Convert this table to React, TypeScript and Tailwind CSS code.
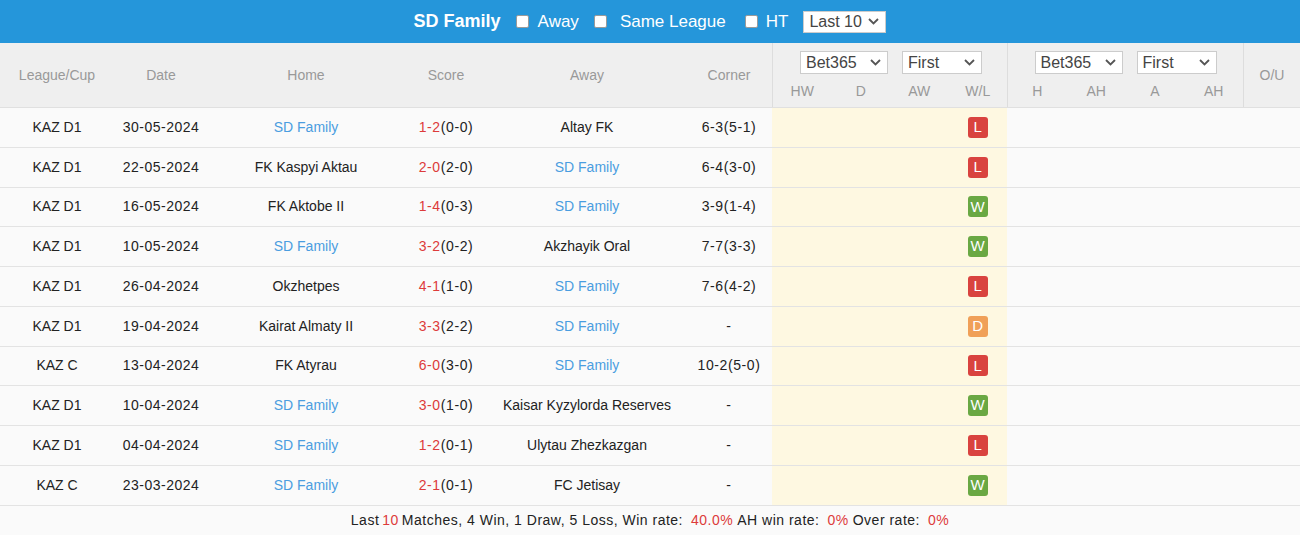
import React from 'react';

type Match = {
  league: string;
  date: string;
  home: string;
  score: string;
  ht: string;
  away: string;
  corner: string;
  result: 'W' | 'D' | 'L';
};

const TEAM = 'SD Family';

const matches: Match[] = [
  { league: 'KAZ D1', date: '30-05-2024', home: 'SD Family', score: '1-2', ht: '(0-0)', away: 'Altay FK', corner: '6-3(5-1)', result: 'L' },
  { league: 'KAZ D1', date: '22-05-2024', home: 'FK Kaspyi Aktau', score: '2-0', ht: '(2-0)', away: 'SD Family', corner: '6-4(3-0)', result: 'L' },
  { league: 'KAZ D1', date: '16-05-2024', home: 'FK Aktobe II', score: '1-4', ht: '(0-3)', away: 'SD Family', corner: '3-9(1-4)', result: 'W' },
  { league: 'KAZ D1', date: '10-05-2024', home: 'SD Family', score: '3-2', ht: '(0-2)', away: 'Akzhayik Oral', corner: '7-7(3-3)', result: 'W' },
  { league: 'KAZ D1', date: '26-04-2024', home: 'Okzhetpes', score: '4-1', ht: '(1-0)', away: 'SD Family', corner: '7-6(4-2)', result: 'L' },
  { league: 'KAZ D1', date: '19-04-2024', home: 'Kairat Almaty II', score: '3-3', ht: '(2-2)', away: 'SD Family', corner: '-', result: 'D' },
  { league: 'KAZ C', date: '13-04-2024', home: 'FK Atyrau', score: '6-0', ht: '(3-0)', away: 'SD Family', corner: '10-2(5-0)', result: 'L' },
  { league: 'KAZ D1', date: '10-04-2024', home: 'SD Family', score: '3-0', ht: '(1-0)', away: 'Kaisar Kyzylorda Reserves', corner: '-', result: 'W' },
  { league: 'KAZ D1', date: '04-04-2024', home: 'SD Family', score: '1-2', ht: '(0-1)', away: 'Ulytau Zhezkazgan', corner: '-', result: 'L' },
  { league: 'KAZ C', date: '23-03-2024', home: 'SD Family', score: '2-1', ht: '(0-1)', away: 'FC Jetisay', corner: '-', result: 'W' },
];

const badgeColor: Record<Match['result'], string> = {
  W: 'bg-[#6aa843]',
  D: 'bg-[#f0a058]',
  L: 'bg-[#d9433f]',
};

function Chevron() {
  return (
    <svg width="11" height="7" viewBox="0 0 11 7" className="shrink-0">
      <polyline points="1,1 5.5,5.5 10,1" fill="none" stroke="#555" strokeWidth="1.8" />
    </svg>
  );
}

// fake select box, drawn so it looks the same in every browser
function SelectBox({ label, width, height = 'h-[23px]' }: { label: string; width: string; height?: string }) {
  return (
    <div className={`${width} ${height} bg-white border border-[#cccccc] flex items-center justify-between pl-[5px] pr-[6px] text-[16px] text-[#444]`}>
      <span>{label}</span>
      <Chevron />
    </div>
  );
}

function CheckBox() {
  return <div className="w-[13px] h-[13px] bg-white rounded-[2px] border border-[#9a9a9a]" />;
}

function TeamName({ name }: { name: string }) {
  return <span className={name === TEAM ? 'text-[#4a9de0]' : 'text-[#222]'}>{name}</span>;
}

export default function App() {
  return (
    <div className="w-[1300px] h-[535px] bg-white text-[14px] text-[#222] overflow-hidden" style={{ fontFamily: '"Liberation Sans", Arial, sans-serif' }}>
      {/* Title bar */}
      <div className="h-[43px] bg-[#2596da] flex items-center justify-center text-white">
        <span className="font-bold text-[18px] mr-[15px]">SD Family</span>
        <CheckBox />
        <span className="text-[17px] ml-[9px] mr-[15px]">Away</span>
        <CheckBox />
        <span className="text-[17px] ml-[13px] mr-[19px]">Same League</span>
        <CheckBox />
        <span className="text-[17px] ml-[8px] mr-[15px]">HT</span>
        <SelectBox label="Last 10" width="w-[83px]" height="h-[22px]" />
      </div>

      {/* Column headers */}
      <div className="h-[65px] bg-[#efefef] border-b border-[#e0e0e0] flex text-[#999]">
        <div className="w-[114px] flex items-center justify-center">League/Cup</div>
        <div className="w-[94px] flex items-center justify-center">Date</div>
        <div className="w-[196px] flex items-center justify-center">Home</div>
        <div className="w-[84px] flex items-center justify-center">Score</div>
        <div className="w-[198px] flex items-center justify-center">Away</div>
        <div className="w-[86px] flex items-center justify-center">Corner</div>
        <div className="w-[235px] border-l border-[#dddddd] flex flex-col">
          <div className="flex justify-center gap-[14px] pt-[8px] pl-[2px]">
            <SelectBox label="Bet365" width="w-[88px]" />
            <SelectBox label="First" width="w-[80px]" />
          </div>
          <div className="grid grid-cols-4 mt-[7px] text-center">
            <span>HW</span>
            <span>D</span>
            <span>AW</span>
            <span>W/L</span>
          </div>
        </div>
        <div className="w-[236px] border-l border-[#dddddd] flex flex-col">
          <div className="flex justify-center gap-[14px] pt-[8px]">
            <SelectBox label="Bet365" width="w-[88px]" />
            <SelectBox label="First" width="w-[80px]" />
          </div>
          <div className="grid grid-cols-4 mt-[7px] text-center">
            <span>H</span>
            <span>AH</span>
            <span>A</span>
            <span>AH</span>
          </div>
        </div>
        <div className="flex-1 border-l border-[#dddddd] flex items-center justify-center">O/U</div>
      </div>

      {/* Match rows */}
      {matches.map((m, i) => (
        <div key={i} className="h-[39.75px] border-b border-[#e3e3e3] bg-[#fafafa] flex items-center">
          <div className="w-[114px] text-center">{m.league}</div>
          <div className="w-[94px] text-center tracking-[0.5px]">{m.date}</div>
          <div className="w-[196px] text-center"><TeamName name={m.home} /></div>
          <div className="w-[84px] text-center tracking-[0.6px]">
            <span className="text-[#dd3b3b]">{m.score}</span>
            {m.ht}
          </div>
          <div className="w-[198px] text-center"><TeamName name={m.away} /></div>
          <div className="w-[86px] text-center tracking-[0.6px]">{m.corner}</div>
          <div className="w-[235px] self-stretch bg-[#fef8e1] grid grid-cols-4 items-center">
            <span />
            <span />
            <span />
            <span className="flex justify-center">
              <span className={`${badgeColor[m.result]} w-[20px] h-[21px] rounded-[3px] text-white text-[15px] flex items-center justify-center`}>
                {m.result}
              </span>
            </span>
          </div>
          <div className="flex-1" />
        </div>
      ))}

      {/* Summary */}
      <div className="h-[30px] flex items-center justify-center bg-[#fafafa] tracking-[0.5px]">
        Last <span className="text-[#dd3b3b] mx-[3px]">10</span> Matches, 4 Win, 1 Draw, 5 Loss, Win rate:
        <span className="text-[#dd3b3b] ml-[8px] mr-[4px]">40.0%</span> AH win rate:
        <span className="text-[#dd3b3b] ml-[8px] mr-[4px]">0%</span> Over rate:
        <span className="text-[#dd3b3b] ml-[8px]">0%</span>
      </div>
    </div>
  );
}
